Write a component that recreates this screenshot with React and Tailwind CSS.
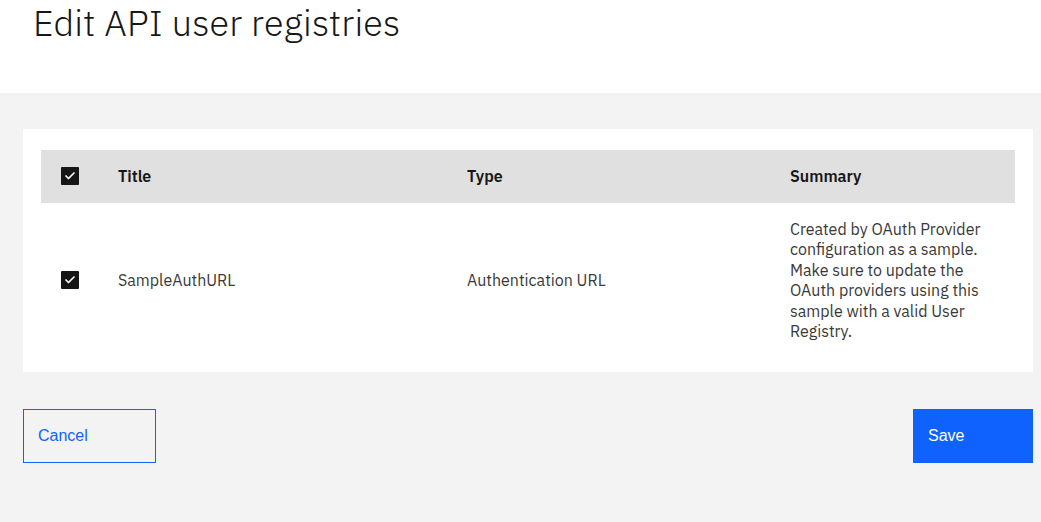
import { Check } from "lucide-react";

const PLEX = "font-['IBM_Plex_Sans','Inter',sans-serif]";

function Box() {
  return (
    <span className="w-[18px] h-[18px] bg-[#161616] rounded-[1px] flex items-center justify-center">
      <Check className="w-3 h-3 text-white" strokeWidth={3.5} />
    </span>
  );
}

export default function App() {
  return (
    <div className={`w-[1041px] h-[522px] bg-[#f3f3f3] text-[#161616] ${PLEX}`}>
      {/* Page header */}
      <div className="h-[93px] bg-white pl-[33px]">
        <h1 className="text-[36px] leading-[46px] font-light tracking-[0.2px]">Edit API user registries</h1>
      </div>

      {/* Table card */}
      <div className="ml-[23px] w-[1010px] mt-[36px] bg-white px-[18px] pt-[21px] pb-[15px]">
        <div className="grid grid-cols-[77px_349px_323px_1fr] h-[53px] items-center bg-[#e0e0e0] text-[16px] font-semibold pb-[2px]">
          <div className="pl-[20px]"><Box /></div>
          <div>Title</div>
          <div>Type</div>
          <div>Summary</div>
        </div>
        <div className="grid grid-cols-[77px_349px_323px_1fr] items-center text-[16px] text-[#393939] py-[16px]">
          <div className="pl-[20px]"><Box /></div>
          <div>SampleAuthURL</div>
          <div>Authentication URL</div>
          <div className="leading-[20.4px] pr-[20px]">
            Created by OAuth Provider configuration as a sample. Make sure to update the OAuth providers using this sample with a valid User Registry.
          </div>
        </div>
      </div>

      {/* Actions */}
      <div className="ml-[23px] w-[1010px] mt-[37px] flex justify-between font-['Liberation_Sans',Arial,sans-serif] text-[16px]">
        <button className="w-[133px] h-[54px] border border-[#0f62fe] text-[#0f62fe] text-left pl-[14px]">Cancel</button>
        <button className="w-[120px] h-[54px] bg-[#0f62fe] text-white text-left pl-[15px]">Save</button>
      </div>
    </div>
  );
}
